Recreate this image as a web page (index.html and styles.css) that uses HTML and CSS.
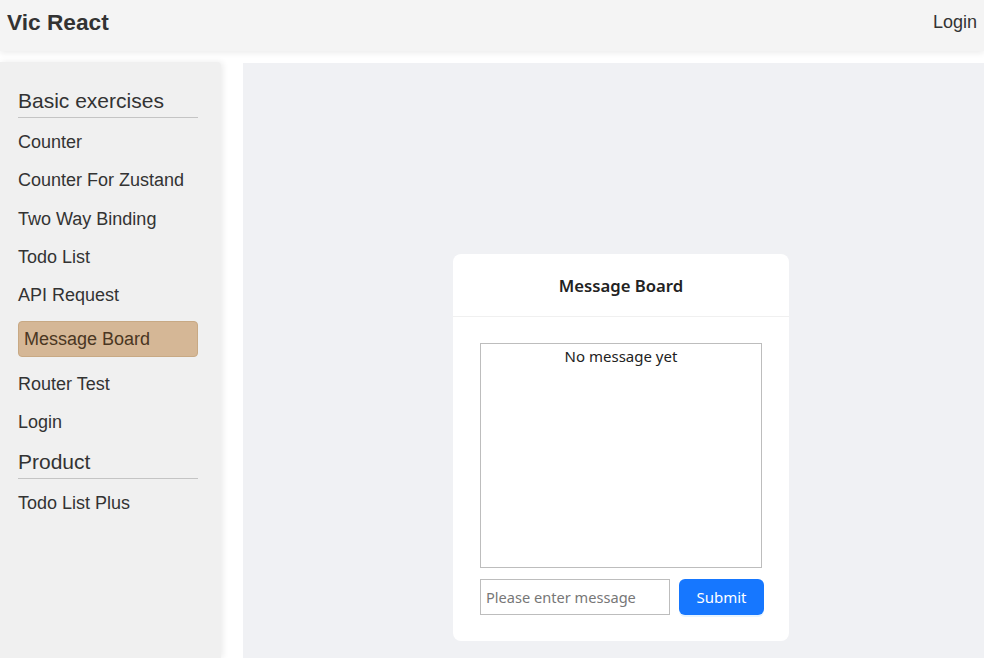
FILE: index.html
```html
<!DOCTYPE html>
<html>
<head>
<meta charset="utf-8">
<link rel="stylesheet" href="styles.css">
</head>
<body>
<header class="topbar">
  <div class="brand">Vic React</div>
  <div class="login">Login</div>
</header>
<div class="layout">
  <aside class="sidebar">
    <div class="group-title">Basic exercises</div>
    <ul class="menu">
      <li class="item">Counter</li>
      <li class="item">Counter For Zustand</li>
      <li class="item">Two Way Binding</li>
      <li class="item">Todo List</li>
      <li class="item">API Request</li>
      <li class="item active">Message Board</li>
      <li class="item">Router Test</li>
      <li class="item">Login</li>
    </ul>
    <div class="group-title second">Product</div>
    <ul class="menu">
      <li class="item">Todo List Plus</li>
    </ul>
  </aside>
  <main class="content">
    <section class="card">
      <div class="card-head">Message Board</div>
      <div class="card-body">
        <div class="messages">No message yet</div>
        <div class="form-row">
          <input class="msg-input" type="text" placeholder="Please enter message">
          <button class="submit">Submit</button>
        </div>
      </div>
    </section>
  </main>
</div>
</body>
</html>
```

FILE: styles.css
```css
html, body {
  margin: 0;
  padding: 0;
  height: 100%;
  overflow: hidden;
}
body {
  font-family: "Liberation Sans", Arial, sans-serif;
  background: #ffffff;
  color: #333;
}
.topbar {
  height: 51px;
  background: #f4f4f4;
  box-shadow: 0 2px 6px rgba(0,0,0,0.08);
  display: flex;
  align-items: center;
  justify-content: space-between;
  padding: 0 7px;
  position: relative;
  z-index: 2;
}
.brand {
  font-size: 22.7px;
  font-weight: bold;
  color: #333;
  margin-top: -6px;
}
.login {
  font-size: 18px;
  color: #333;
  margin-top: -6px;
}
.layout {
  display: flex;
  gap: 22px;
  margin-top: 11px;
  height: calc(100% - 62px);
}
.sidebar {
  width: 221px;
  flex: none;
  background: #f0f0f0;
  box-shadow: 2px 0 6px rgba(0,0,0,0.08);
  border-top-right-radius: 4px;
  padding: 27px 23px 0 18px;
  box-sizing: border-box;
}
.group-title {
  font-size: 21px;
  line-height: 24px;
  color: #333;
  padding-bottom: 4px;
  border-bottom: 1px solid #c4c4c4;
  margin-bottom: 12px;
}
.group-title.second {
  margin-top: 16px;
  margin-bottom: 12px;
}
.menu {
  list-style: none;
  margin: 0;
  padding: 0;
  display: flex;
  flex-direction: column;
  gap: 14.3px;
}
.item {
  font-size: 18px;
  line-height: 24px;
  color: #333;
}
.item.active {
  height: 36px;
  line-height: 34px;
  box-sizing: border-box;
  background: #d5b796;
  border: 1px solid #c8a984;
  border-radius: 4px;
  padding-left: 5px;
  color: #4a3622;
}
.content {
  flex: 1;
  background: #f0f1f4;
  display: flex;
  justify-content: center;
  align-items: flex-start;
  padding: 191px 0 0 15px;
  margin-top: 1px;
}
.card {
  width: 336px;
  background: #fff;
  border-radius: 8px;
  font-family: "Noto Sans", "Open Sans", sans-serif;
}
.card-head {
  height: 62px;
  border-bottom: 1px solid #f0f0f0;
  display: flex;
  align-items: center;
  justify-content: center;
  font-size: 16.7px;
  font-weight: 600;
  color: #222;
}
.card-body {
  padding: 26px 25px 26px 27px;
}
.messages {
  width: 282px;
  height: 225px;
  box-sizing: border-box;
  border: 1px solid #bdbdbd;
  text-align: center;
  font-size: 15px;
  line-height: 24px;
  color: #222;
  padding-top: 0;
}
.form-row {
  display: flex;
  gap: 9px;
  margin-top: 11px;
}
.msg-input {
  width: 190px;
  height: 36px;
  box-sizing: border-box;
  border: 1px solid #bdbdbd;
  border-radius: 0;
  padding: 0 5px;
  font-family: "Noto Sans", "Open Sans", sans-serif;
  font-size: 14.6px;
  color: #333;
  outline: none;
}
.msg-input::placeholder {
  color: #777;
}
.submit {
  width: 85px;
  height: 36px;
  border: none;
  border-radius: 6px;
  background: #1677ff;
  color: #fff;
  font-family: "Noto Sans", "Open Sans", sans-serif;
  font-size: 15px;
  box-shadow: 0 2px 0 rgba(5,145,255,0.1);
  cursor: pointer;
}
```
